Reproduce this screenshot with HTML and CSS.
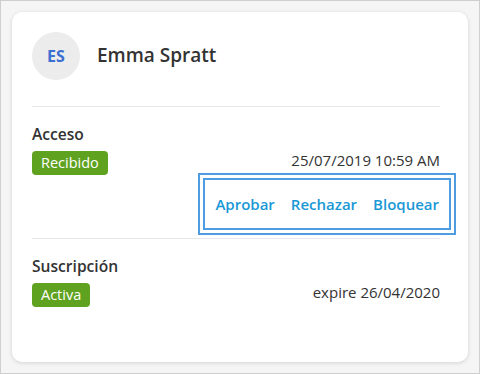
FILE: index.html
```html
<!DOCTYPE html>
<html lang="es">
<head>
  <meta charset="UTF-8">
  <title>Emma Spratt</title>
  <link rel="stylesheet" href="styles.css">
</head>
<body>
  <div class="frame">
    <div class="card">
      <div class="card-header">
        <div class="avatar">ES</div>
        <div class="user-name">Emma Spratt</div>
      </div>

      <!-- Acceso -->
      <div class="section">
        <div class="section-title">Acceso</div>
        <div class="row">
          <span class="badge">Recibido</span>
          <span class="meta">25/07/2019 10:59 AM</span>
        </div>
        <div class="actions">
          <div class="btn-group">
            <button class="btn-link">Aprobar</button>
            <button class="btn-link">Rechazar</button>
            <button class="btn-link">Bloquear</button>
          </div>
        </div>
      </div>

      <!-- Suscripcion -->
      <div class="section last">
        <div class="section-title">Suscripción</div>
        <div class="row">
          <span class="badge">Activa</span>
          <span class="meta">expire 26/04/2020</span>
        </div>
      </div>
    </div>
  </div>
</body>
</html>
```

FILE: styles.css
```css
html, body {
  margin: 0;
  height: 100%;
}

body {
  font-family: "Open Sans", Arial, sans-serif;
  color: #333;
  background: #f5f5f5;
}

.frame {
  box-sizing: border-box;
  height: 374px;
  border: 1px solid #cfcfcf;
  padding: 11px;
}

.card {
  box-sizing: border-box;
  height: 350px;
  background: #fff;
  border-radius: 10px;
  box-shadow: 0 1px 4px rgba(0, 0, 0, 0.14);
  padding: 20px 28px 0 20px;
}

.card-header {
  display: flex;
  align-items: center;
  gap: 17px;
  padding-bottom: 26px;
  border-bottom: 1px solid #e8e8e8;
}

.avatar {
  width: 48px;
  height: 48px;
  border-radius: 50%;
  background: #ececec;
  color: #3b6fd1;
  font-weight: 700;
  font-size: 16px;
  display: flex;
  align-items: center;
  justify-content: center;
}

.user-name {
  font-size: 19px;
  font-weight: 600;
  margin-top: -2px;
}

.section {
  padding: 16px 0 8px;
  border-bottom: 1px solid #e8e8e8;
}

.section.last {
  border-bottom: none;
}

.section-title {
  font-size: 15.6px;
  font-weight: 600;
  line-height: 22px;
  margin-bottom: 6px;
}

.row {
  display: flex;
  justify-content: space-between;
  align-items: center;
}

.badge {
  background: #5fa220;
  color: #fff;
  font-size: 14.5px;
  line-height: 20px;
  padding: 2px 9px;
  border-radius: 4px;
}

.meta {
  font-size: 15px;
  margin-top: -7px;
}

.actions {
  display: flex;
  justify-content: flex-end;
  margin: 3px -11px 0 0;
}

.btn-group {
  display: flex;
  padding: 0 2px;
  border: 2px solid #4f9de0;
  outline: 2px solid #4f9de0;
  outline-offset: 3px;
}

.btn-link {
  background: none;
  border: none;
  font-family: inherit;
  font-size: 15px;
  font-weight: 600;
  line-height: 20px;
  color: #1a98d6;
  padding: 14px 8px;
  cursor: pointer;
}
```
